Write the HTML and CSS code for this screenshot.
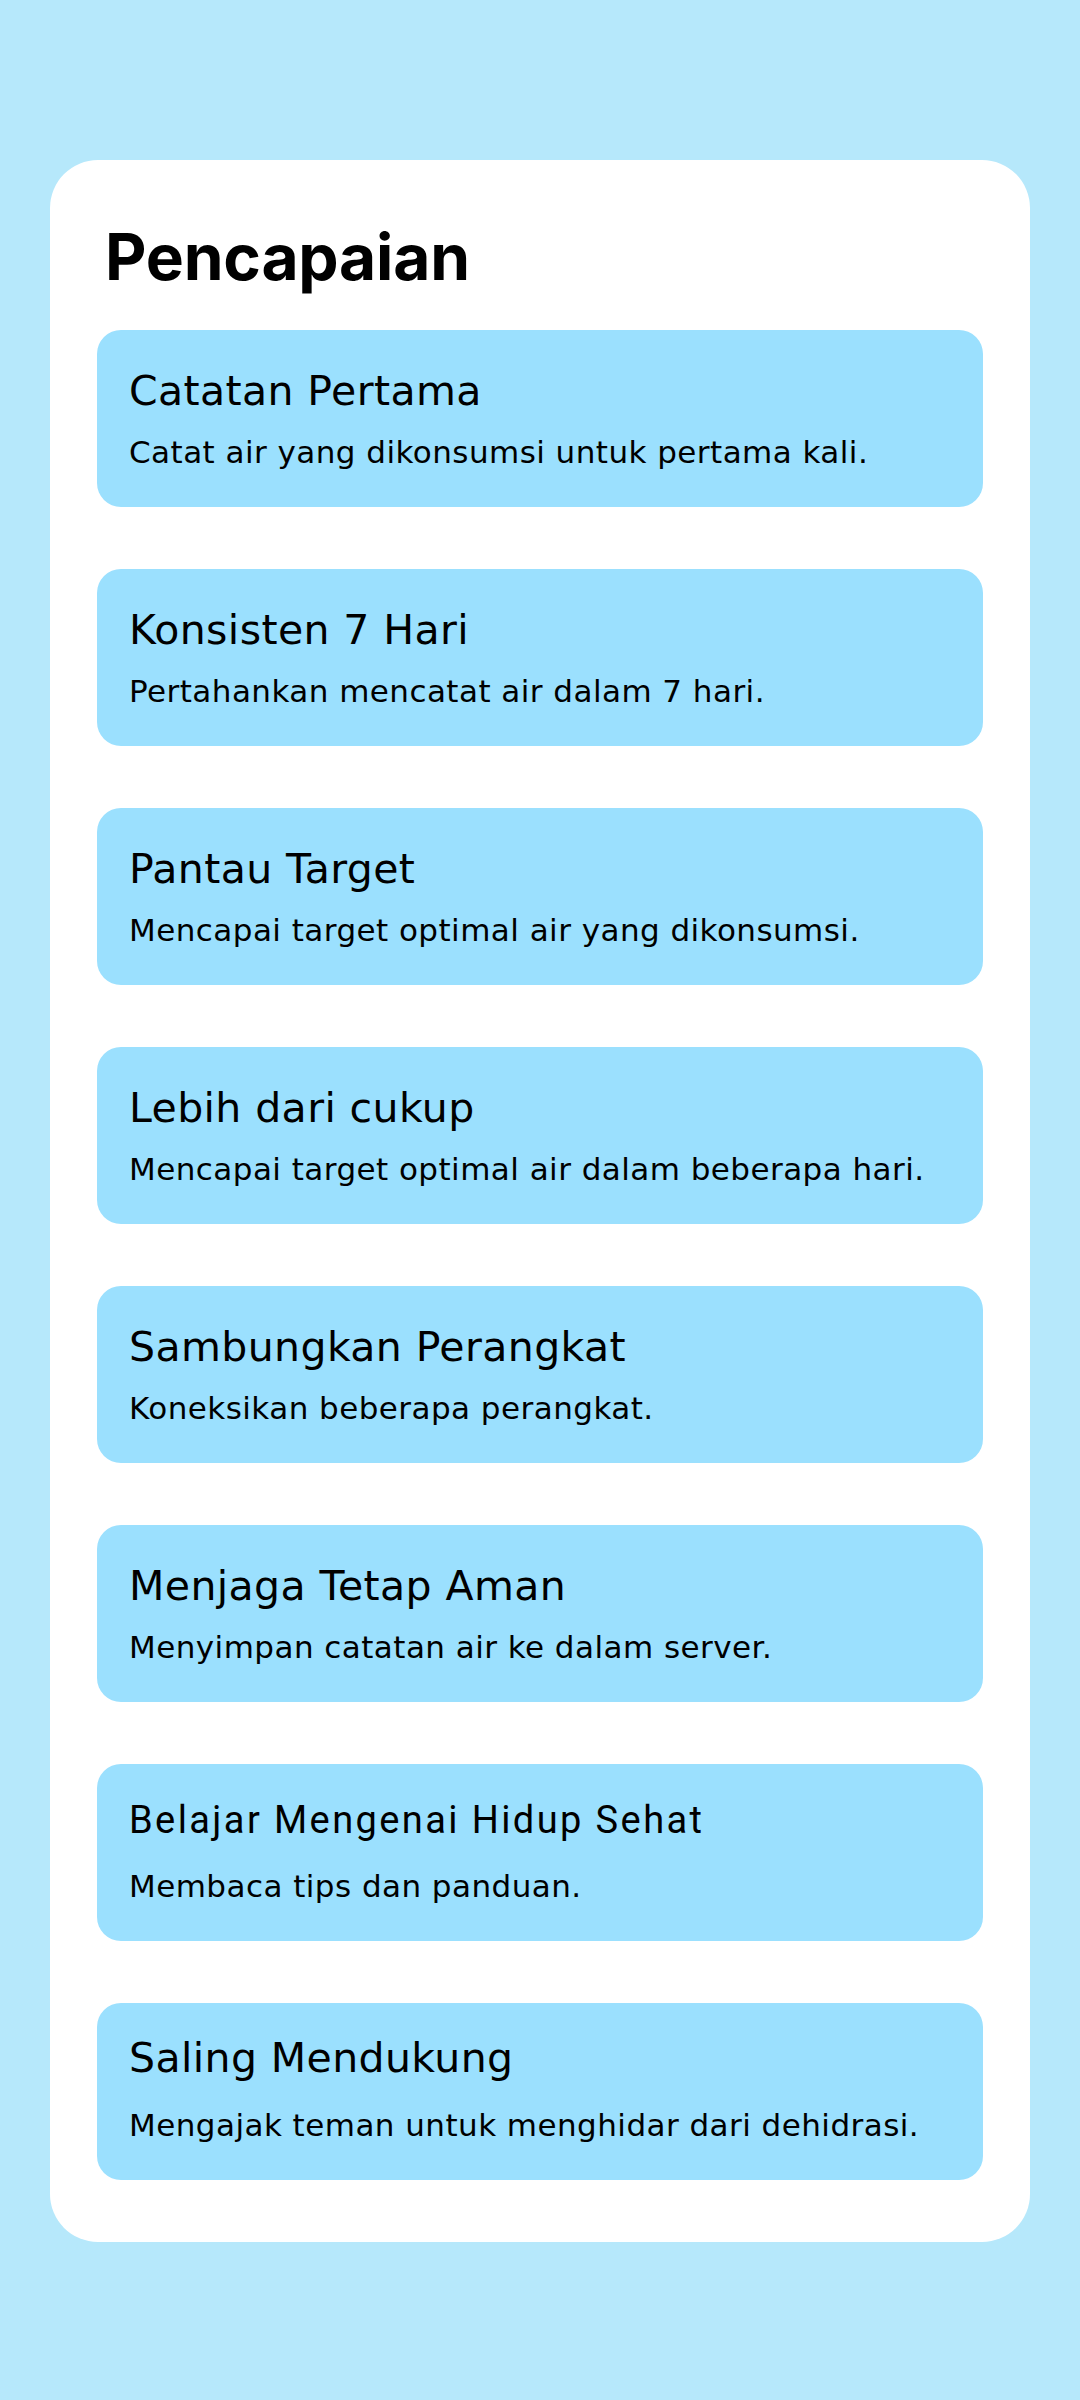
FILE: index.html
```html
<!DOCTYPE html>
<html lang="id">
<head>
<meta charset="utf-8">
<title>Pencapaian</title>
<link rel="stylesheet" href="styles.css">
</head>
<body>
<main class="card">
  <h1 class="heading">Pencapaian</h1>
  <ul class="list">
    <li class="item">
      <h2 class="item-title">Catatan Pertama</h2>
      <p class="item-desc">Catat air yang dikonsumsi untuk pertama kali.</p>
    </li>
    <li class="item">
      <h2 class="item-title">Konsisten 7 Hari</h2>
      <p class="item-desc">Pertahankan mencatat air dalam 7 hari.</p>
    </li>
    <li class="item">
      <h2 class="item-title">Pantau Target</h2>
      <p class="item-desc">Mencapai target optimal air yang dikonsumsi.</p>
    </li>
    <li class="item">
      <h2 class="item-title">Lebih dari cukup</h2>
      <p class="item-desc">Mencapai target optimal air dalam beberapa hari.</p>
    </li>
    <li class="item">
      <h2 class="item-title">Sambungkan Perangkat</h2>
      <p class="item-desc">Koneksikan beberapa perangkat.</p>
    </li>
    <li class="item">
      <h2 class="item-title">Menjaga Tetap Aman</h2>
      <p class="item-desc">Menyimpan catatan air ke dalam server.</p>
    </li>
    <li class="item item--tight">
      <h2 class="item-title item-title--alt">Belajar Mengenai Hidup Sehat</h2>
      <p class="item-desc">Membaca tips dan panduan.</p>
    </li>
    <li class="item item--tight">
      <h2 class="item-title">Saling Mendukung</h2>
      <p class="item-desc">Mengajak teman untuk menghidar dari dehidrasi.</p>
    </li>
  </ul>
</main>
</body>
</html>
```

FILE: styles.css
```css
html, body {
  margin: 0;
  padding: 0;
}

body {
  background: #b6e8fb;
  width: 1080px;
  min-height: 2400px;
  padding-top: 160px;
  box-sizing: border-box;
  font-family: "DejaVu Sans", "Open Sans", sans-serif;
  color: #000;
}

.card {
  margin: 0 50px;
  width: 980px;
  box-sizing: border-box;
  background: #ffffff;
  border-radius: 48px;
  padding: 58px 47px 62px 47px;
}

.heading {
  margin: 0 0 34px 8px;
  font-family: Inter, "Noto Sans", sans-serif;
  font-weight: 700;
  font-size: 64px;
  line-height: 78px;
  letter-spacing: -0.2px;
}

.list {
  list-style: none;
  margin: 0;
  padding: 0;
  display: flex;
  flex-direction: column;
  gap: 62px;
}

.item {
  background: #9be0fe;
  border-radius: 24px;
  height: 177px;
  box-sizing: border-box;
  padding: 34px 32px 0 32px;
}

.item-title {
  margin: 0 0 14px 0;
  font-weight: 400;
  font-size: 41px;
  line-height: 54px;
  letter-spacing: 0.4px;
  white-space: nowrap;
}

.item-title--alt {
  font-family: Roboto, "Noto Sans", sans-serif;
  font-size: 38px;
  letter-spacing: 2.4px;
}

.item-desc {
  margin: 0;
  font-size: 31px;
  line-height: 40px;
  letter-spacing: 0.45px;
  white-space: nowrap;
}

.item--tight {
  padding-top: 28px;
}

.item--tight .item-title {
  margin-bottom: 20px;
}

.item--tight .item-title--alt {
  margin-top: 1px;
  margin-bottom: 19px;
}
```
